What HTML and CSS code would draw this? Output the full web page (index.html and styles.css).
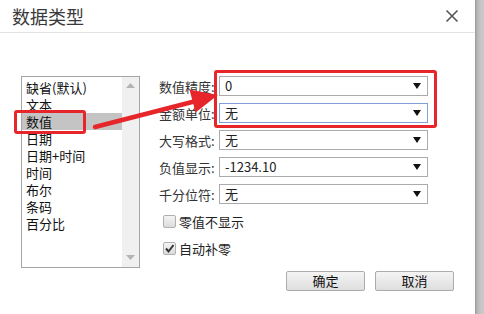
FILE: index.html
```html
<!DOCTYPE html>
<html lang="zh">
<head>
<meta charset="utf-8">
<link rel="stylesheet" href="styles.css">
</head>
<body>
<div class="screen">
  <div class="dialog">
    <div class="titlebar">
      <span class="title">数据类型</span>
      <svg class="close" width="14" height="14" viewBox="0 0 14 14"><path d="M1.5 1.5 L12.5 12.5 M12.5 1.5 L1.5 12.5" stroke="#555" stroke-width="1.6" fill="none"/></svg>
    </div>
    <div class="body">
      <div class="listbox">
        <ul class="items">
          <li>缺省(默认)</li>
          <li>文本</li>
          <li class="sel">数值</li>
          <li>日期</li>
          <li>日期+时间</li>
          <li>时间</li>
          <li>布尔</li>
          <li>条码</li>
          <li>百分比</li>
        </ul>
        <div class="scrollbar">
          <svg width="9" height="5" viewBox="0 0 9 5"><path d="M0 5 L4.5 0 L9 5 Z" fill="#b4b4b4"/></svg>
          <svg width="9" height="5" viewBox="0 0 9 5"><path d="M0 0 L4.5 5 L9 0 Z" fill="#b4b4b4"/></svg>
        </div>
      </div>
      <div class="panel">
        <div class="row"><span class="label">数值精度:</span><div class="select"><span>0</span><i class="caret"></i></div></div>
        <div class="row"><span class="label">金额单位:</span><div class="select focus"><span>无</span><i class="caret"></i></div></div>
        <div class="row"><span class="label">大写格式:</span><div class="select"><span>无</span><i class="caret"></i></div></div>
        <div class="row"><span class="label">负值显示:</span><div class="select"><span>-1234.10</span><i class="caret"></i></div></div>
        <div class="row"><span class="label">千分位符:</span><div class="select"><span>无</span><i class="caret"></i></div></div>
        <div class="check first"><span class="box"></span><span>零值不显示</span></div>
        <div class="check"><span class="box checked"><svg width="11" height="11" viewBox="0 0 11 11"><path d="M2 5.5 L4.5 8.5 L9.5 2" stroke="#333" stroke-width="2" fill="none"/></svg></span><span>自动补零</span></div>
        <div class="buttons">
          <button class="btn">确定</button>
          <button class="btn">取消</button>
        </div>
      </div>
    </div>
    <div class="mark mark-list"></div>
    <div class="mark mark-selects"></div>
    <svg class="arrow" width="484" height="314" viewBox="0 0 484 314">
      <path d="M95 127 L196 101" stroke="#e6262b" stroke-width="4.5" stroke-linecap="round" fill="none"/>
      <path d="M218 95 L189.5 89.5 L195.5 112.5 Z" fill="#e6262b"/>
    </svg>
  </div>
  <div class="shade"></div>
</div>
</body>
</html>
```
FILE: styles.css
```css
* { box-sizing: border-box; }
html, body { margin: 0; padding: 0; }
body {
  width: 484px;
  height: 314px;
  overflow: hidden;
  font-family: "Noto Sans CJK SC", "Liberation Sans", sans-serif;
  font-size: 13px;
  color: #222;
  background: #fff;
}
.screen {
  display: flex;
  width: 484px;
  height: 314px;
}
.dialog {
  position: relative;
  width: 475px;
  height: 314px;
  background: #fff;
  display: flex;
  flex-direction: column;
}
.shade {
  flex: 1;
  background: linear-gradient(to right, #9a9a9a 0, #b4b4b4 2px, #c4c4c4 5px, #cacaca 100%);
}
.titlebar {
  height: 33px;
  border-bottom: 1px solid #e2e2e2;
  display: flex;
  align-items: center;
  justify-content: space-between;
  padding: 0 16px 1px 12px;
}
.title {
  font-size: 18px;
  color: #3a3a3a;
  line-height: 20px;
}
.close { display: block; margin-top: 1px; }
.body {
  display: flex;
  padding: 43px 0 0 21px;
}
.listbox {
  width: 119px;
  height: 192px;
  border: 1px solid #a5a5a5;
  display: flex;
}
.items {
  list-style: none;
  margin: 0;
  padding: 2px 0 0 0;
  flex: 1;
}
.items li {
  height: 17px;
  line-height: 17px;
  padding-left: 4px;
  color: #111;
  white-space: nowrap;
}
.items li.sel { background: #c4c4c4; }
.scrollbar {
  width: 17px;
  background: #f0f0f0;
  display: flex;
  flex-direction: column;
  justify-content: space-between;
  align-items: center;
  padding: 6px 0 7px;
}
.scrollbar svg { display: block; }
.panel {
  width: 295px;
  margin-left: 19px;
  display: flex;
  flex-direction: column;
  gap: 7px;
}
.row {
  display: flex;
  align-items: center;
  height: 20px;
}
.label {
  width: 60px;
  color: #333;
  white-space: nowrap;
}
.select {
  width: 209px;
  height: 20px;
  border: 1px solid #ababab;
  display: flex;
  align-items: center;
  justify-content: space-between;
  padding: 0 6px 0 5px;
  color: #222;
  line-height: 18px;
}
.select.focus { border-color: #7f9fd6; }
.caret {
  width: 0;
  height: 0;
  border-left: 4px solid transparent;
  border-right: 4px solid transparent;
  border-top: 6px solid #111;
}
.check {
  display: flex;
  align-items: center;
  height: 20px;
  padding-left: 4px;
  color: #222;
  gap: 3px;
}
.check.first { margin-top: 0; }
.box {
  width: 13px;
  height: 13px;
  border: 1px solid #b0b0b0;
  border-radius: 2px;
  background: linear-gradient(#f4f4f4, #dcdcdc);
  display: flex;
  align-items: center;
  justify-content: center;
}
.box svg { display: block; }
.buttons {
  display: flex;
  justify-content: flex-end;
  gap: 10px;
  margin-top: 6px;
}
.btn {
  width: 79px;
  height: 20px;
  border: 1px solid #acacac;
  border-radius: 2px;
  background: linear-gradient(#f4f4f4, #dedede);
  font-family: "Noto Sans CJK SC", sans-serif;
  font-size: 13px;
  color: #111;
  padding: 0;
  line-height: 18px;
}
.mark {
  position: absolute;
  border: 3px solid #e6262b;
  border-radius: 3px;
}
.mark-list { left: 14px; top: 110px; width: 72px; height: 24px; }
.mark-selects { left: 214px; top: 70px; width: 223px; height: 58px; }
.arrow { position: absolute; left: 0; top: 0; pointer-events: none; }
```
